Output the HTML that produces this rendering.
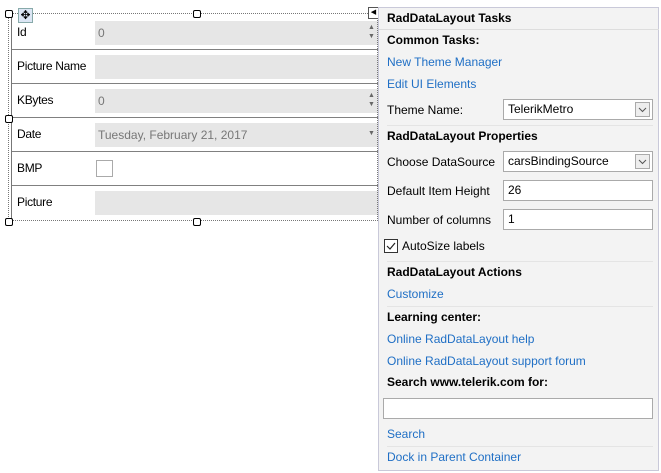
<!DOCTYPE html>
<html><head><style>
body{margin:0;width:661px;height:473px;background:#fff;position:relative;overflow:hidden;font-family:"Liberation Sans",sans-serif;font-size:12px;color:#000}
.a{position:absolute;white-space:nowrap}
.frame{position:absolute;left:8px;top:13px;width:370px;height:208px;border:1px dotted #777;box-sizing:border-box}
.h{position:absolute;width:6px;height:6px;border:1px solid #000;background:#fff;border-radius:2px}
.form{position:absolute;left:11px;top:16px;width:370px;height:204px;border-left:1px solid #777}
.row{position:absolute;left:0;width:370px;height:33px;border-bottom:1px solid #808080}
.inp{position:absolute;left:83px;top:5px;width:290px;height:24px;background:#e6e6e6;color:#777;line-height:24px;padding-left:3px;box-sizing:border-box}
.lbl{position:absolute;left:5px;top:9px;letter-spacing:-0.3px}
.panel{position:absolute;left:378px;top:7px;width:281px;height:464px;background:#f3f3f3;border:1px solid #c9c9d9;box-sizing:border-box}
.b{font-weight:bold}
.lk{color:#1f6fc5}
.sep{position:absolute;left:8px;width:266px;height:1px;background:#e4e4e4}
.box{position:absolute;background:#fff;border:1px solid #aaa;box-sizing:border-box;padding-left:4px;line-height:18px}
.dd{position:absolute;right:2px;top:2px;width:15px;height:15px;border:1px solid #aaa;background:#eee;box-sizing:border-box}
</style></head><body>
<div class="form">
 <div class="row" style="top:0"><span class="lbl">Id</span><div class="inp">0</div><span class="a" style="left:356px;top:7px;font-size:7px;color:#666;line-height:9px">▲<br>▼</span></div>
 <div class="row" style="top:34px"><span class="lbl">Picture Name</span><div class="inp"></div></div>
 <div class="row" style="top:68px"><span class="lbl">KBytes</span><div class="inp">0</div><span class="a" style="left:356px;top:7px;font-size:7px;color:#666;line-height:9px">▲<br>▼</span></div>
 <div class="row" style="top:102px"><span class="lbl">Date</span><div class="inp">Tuesday, February 21, 2017</div><span class="a" style="left:356px;top:12px;font-size:7px;color:#666">▼</span></div>
 <div class="row" style="top:136px"><span class="lbl">BMP</span><div class="a" style="left:84px;top:8px;width:15px;height:15px;border:1px solid #aaa;background:#fff"></div></div>
 <div class="row" style="top:170px;border:none"><span class="lbl">Picture</span><div class="inp"></div></div>
</div>
<div class="frame"></div>
<div class="h" style="left:5px;top:10px"></div><div class="h" style="left:193px;top:10px"></div>
<div class="h" style="left:5px;top:115px"></div><div class="h" style="left:5px;top:218px"></div><div class="h" style="left:193px;top:218px"></div>
<div class="a" style="left:18px;top:8px;width:13px;height:13px;background:#dce6f4;border:1px solid #8aa;font-size:12px;line-height:12px;text-align:center">✥</div>
<div class="a" style="left:368px;top:7px;width:9px;height:10px;border:1px solid #555;background:#fff;font-size:7px;line-height:10px;text-align:center">◀</div>
<div class="panel">
 <span class="a b" style="left:8px;top:3px">RadDataLayout Tasks</span>
 <div class="sep" style="top:21px;left:0;width:280px;background:#ddd"></div>
 <span class="a b" style="left:8px;top:25px">Common Tasks:</span>
 <span class="a lk" style="left:8px;top:47px">New Theme Manager</span>
 <span class="a lk" style="left:8px;top:69px">Edit UI Elements</span>
 <span class="a" style="left:8px;top:95px">Theme Name:</span>
 <div class="box" style="left:124px;top:91px;width:150px;height:21px">TelerikMetro<div class="dd"><svg width="13" height="13"><path d="M3 5l3.5 3.5L10 5" fill="none" stroke="#555"/></svg></div></div>
 <div class="sep" style="top:117px"></div>
 <span class="a b" style="left:8px;top:121px">RadDataLayout Properties</span>
 <span class="a" style="left:8px;top:147px">Choose DataSource</span>
 <div class="box" style="left:124px;top:143px;width:150px;height:21px">carsBindingSource<div class="dd"><svg width="13" height="13"><path d="M3 5l3.5 3.5L10 5" fill="none" stroke="#555"/></svg></div></div>
 <span class="a" style="left:8px;top:176px">Default Item Height</span>
 <div class="box" style="left:124px;top:172px;width:150px;height:21px">26</div>
 <span class="a" style="left:8px;top:205px">Number of columns</span>
 <div class="box" style="left:124px;top:201px;width:150px;height:21px">1</div>
 <div class="a" style="left:5px;top:231px;width:12px;height:12px;border:1px solid #333;background:#fff"><svg width="12" height="12"><path d="M2 6l3 3 5-6" fill="none" stroke="#222" stroke-width="1.2"/></svg></div>
 <span class="a" style="left:23px;top:231px">AutoSize labels</span>
 <div class="sep" style="top:253px"></div>
 <span class="a b" style="left:8px;top:257px">RadDataLayout Actions</span>
 <span class="a lk" style="left:8px;top:279px">Customize</span>
 <div class="sep" style="top:298px"></div>
 <span class="a b" style="left:8px;top:302px">Learning center:</span>
 <span class="a lk" style="left:8px;top:324px">Online RadDataLayout help</span>
 <span class="a lk" style="left:8px;top:346px">Online RadDataLayout support forum</span>
 <span class="a b" style="left:8px;top:367px">Search www.telerik.com for:</span>
 <div class="box" style="left:4px;top:390px;width:270px;height:21px"></div>
 <span class="a lk" style="left:8px;top:419px">Search</span>
 <div class="sep" style="top:438px"></div>
 <span class="a lk" style="left:8px;top:442px">Dock in Parent Container</span>
</div>
</body></html>
